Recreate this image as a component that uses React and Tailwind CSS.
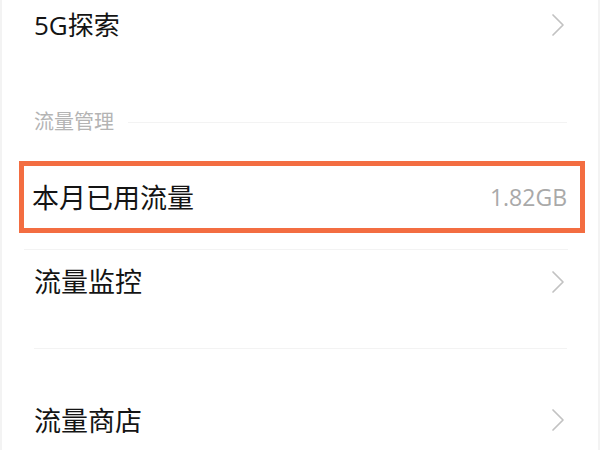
import React from 'react';

const Chevron = () => (
    <svg width="14" height="24" viewBox="0 0 14 24" fill="none">
        <polyline points="2,2 12,12 2,22" stroke="#c2c2c2" strokeWidth="1.7" strokeLinecap="round" strokeLinejoin="round" />
    </svg>
);

export default function App() {
    return (
        <div className="w-[600px] h-[450px] overflow-hidden bg-white border-x-2 border-[#f3f3f3] font-['Open_Sans','Noto_Sans_CJK_SC',sans-serif]">
            {/* 5G explore row */}
            <div className="h-[50px] flex items-center justify-between pl-[32px] pr-[33px]">
                <span className="text-[26px] leading-none text-[#141414]">5G探索</span>
                <Chevron />
            </div>

            {/* section header */}
            <div className="h-[111px] pt-[61px]">
                <div className="h-[22px] flex items-center pl-[32px] pr-[31px]">
                    <span className="text-[20px] leading-none text-[#b4b4b4]">流量管理</span>
                    <div className="flex-1 h-px bg-[#f3f3f3] ml-[14px]" />
                </div>
            </div>

            {/* highlighted row */}
            <div className="ml-[17px] mr-[13px] h-[72px] border-[5px] border-[#f36d41] flex items-center justify-between pl-[8px] pr-[13px]">
                <span className="text-[27px] leading-none text-[#141414]">本月已用流量</span>
                <span className="text-[23px] leading-none text-[#a9a9a9]">1.82GB</span>
            </div>

            <div className="h-[16px]" />
            <div className="h-px bg-[#f3f3f3] ml-[22px] mr-[30px]" />

            <div className="h-[63px] flex items-center justify-between pl-[32px] pr-[33px]">
                <span className="text-[27px] leading-none text-[#141414]">流量监控</span>
                <Chevron />
            </div>

            <div className="h-[35px]" />
            <div className="h-px bg-[#f3f3f3] ml-[32px] mr-[31px]" />

            <div className="pt-[48px]">
                <div className="h-[46px] flex items-center justify-between pl-[32px] pr-[33px]">
                    <span className="text-[27px] leading-none text-[#141414]">流量商店</span>
                    <Chevron />
                </div>
            </div>
        </div>
    );
}
